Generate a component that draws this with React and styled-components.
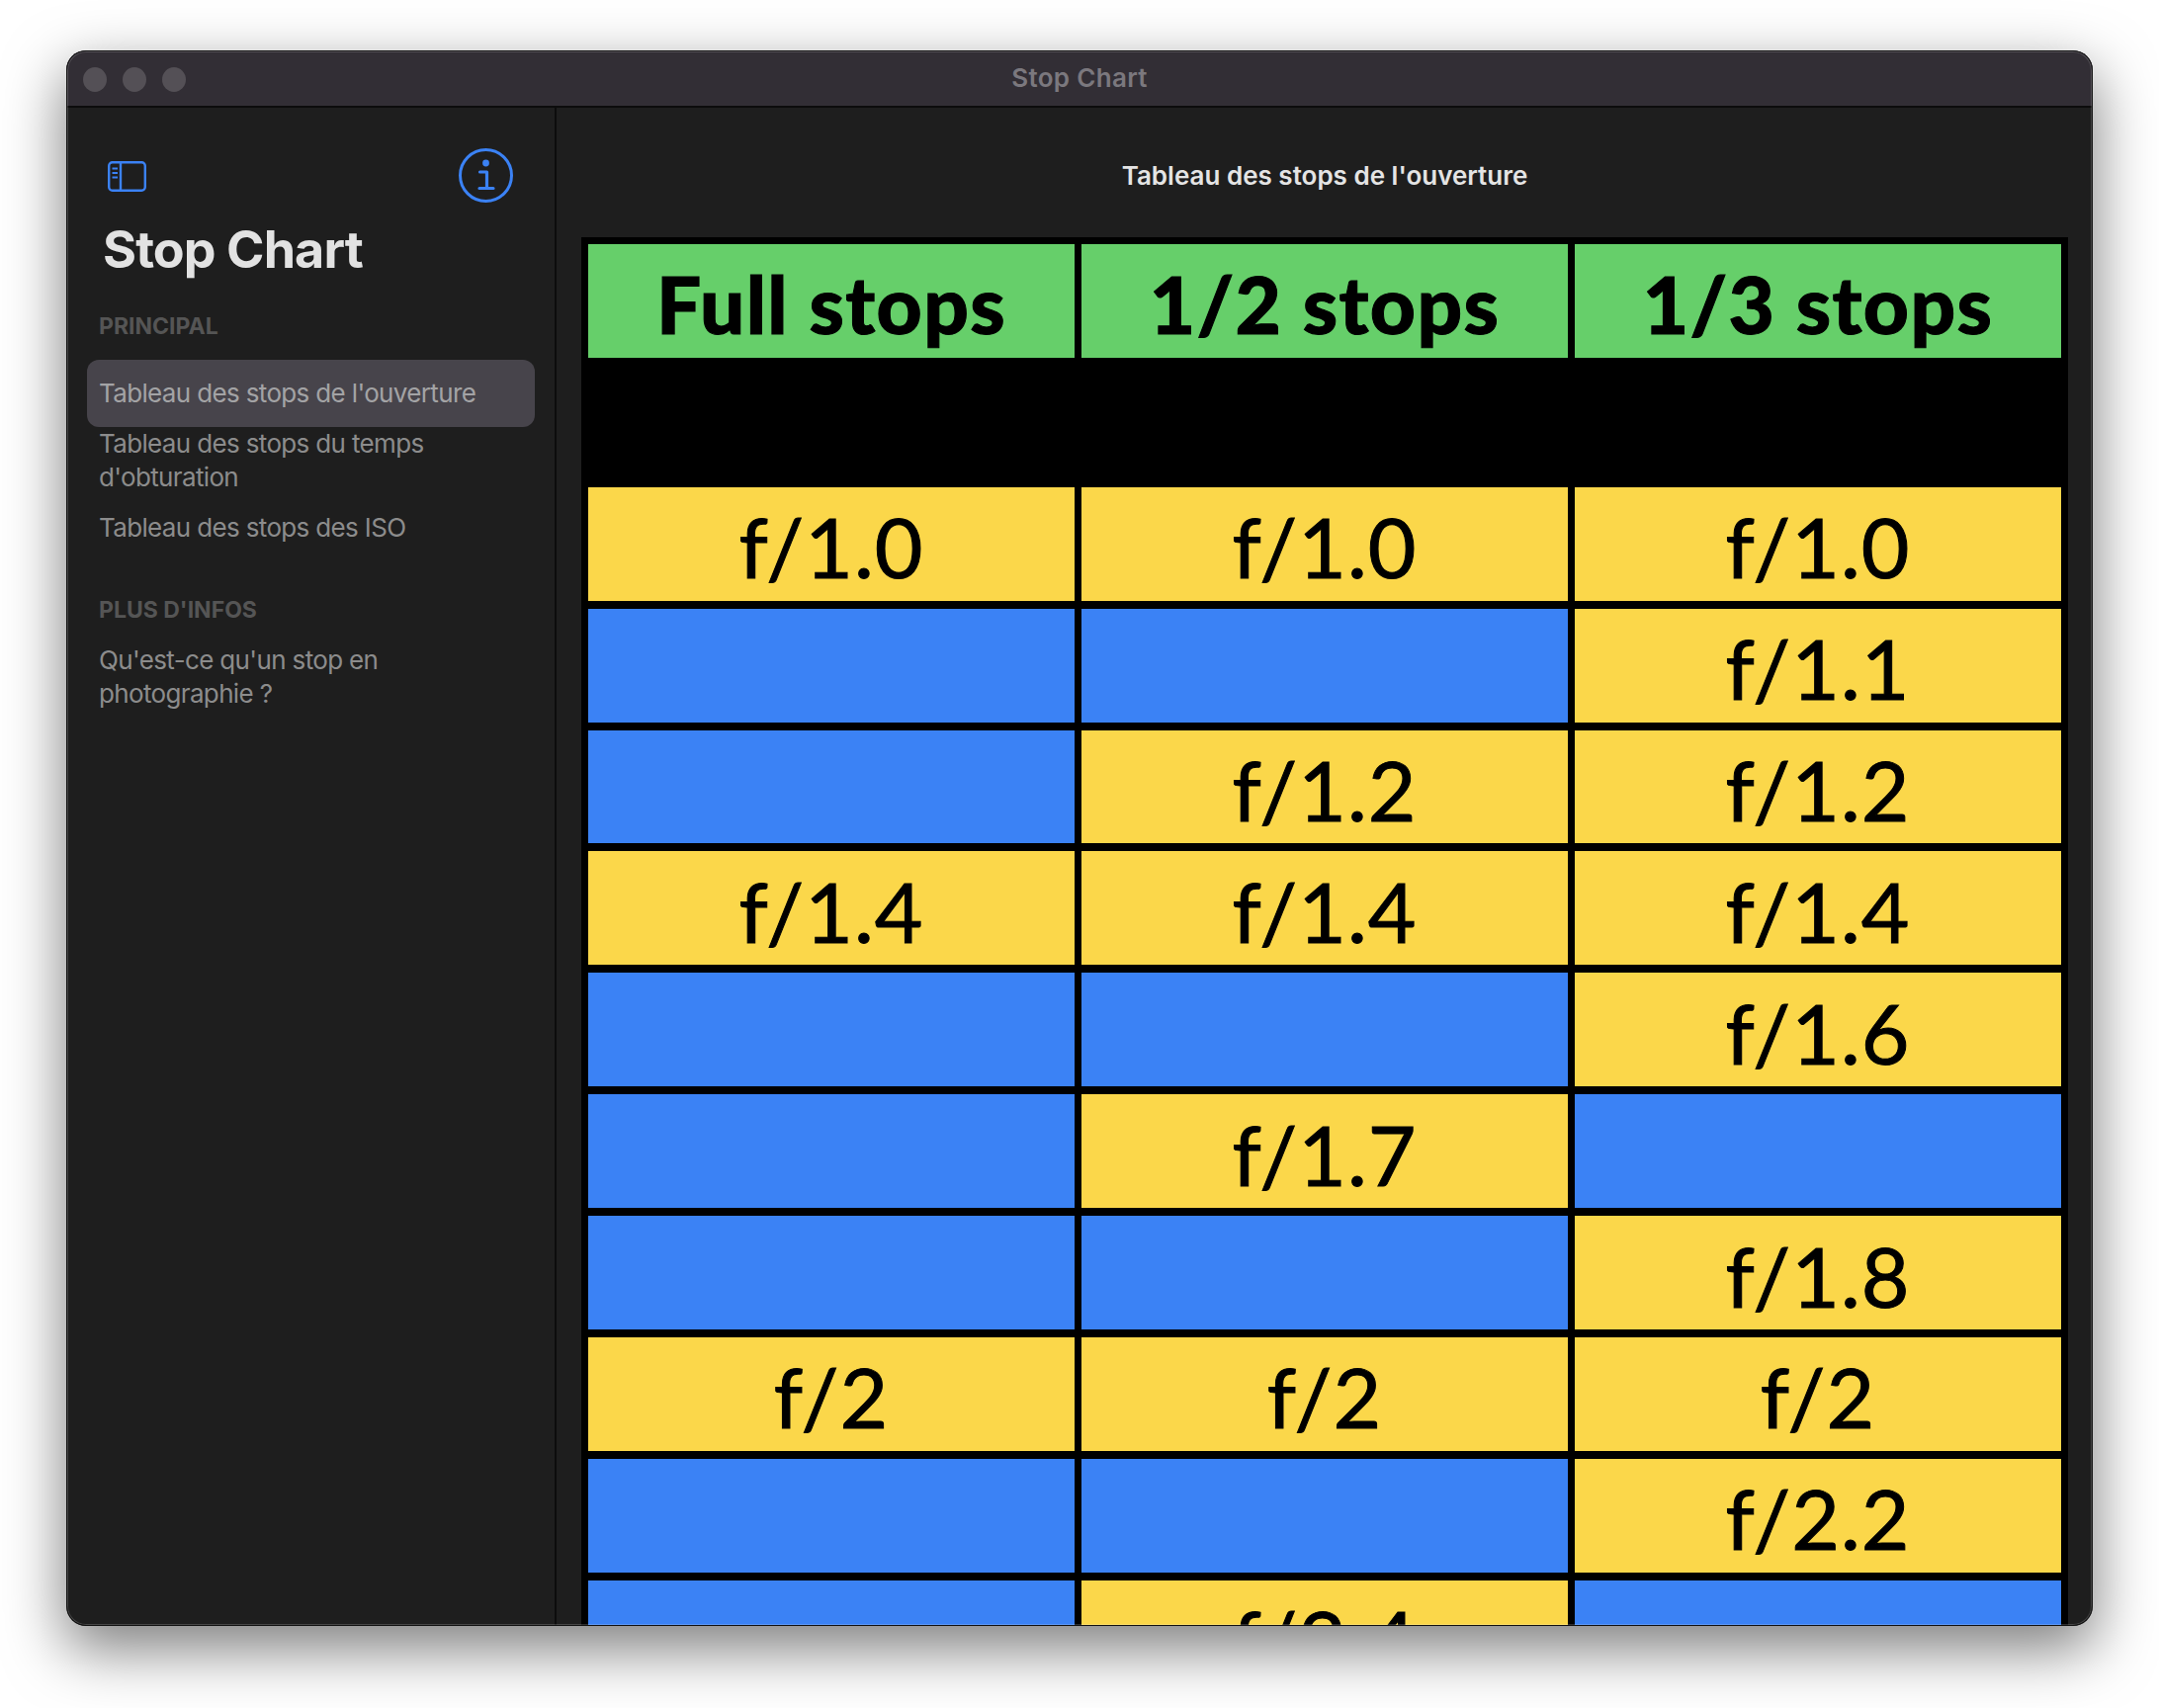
import { createGlobalStyle } from "styled-components";
import styled from "styled-components";

const GlobalStyle = createGlobalStyle`
  html, body {
    margin: 0;
    padding: 0;
    background: #fff;
  }
  * {
    box-sizing: border-box;
  }
`;

const Page = styled.div`
  width: 2184px;
  height: 1728px;
  padding: 51px 67px 0;
  overflow: hidden;
  font-family: Inter, "Liberation Sans", sans-serif;
`;

const Window = styled.div`
  position: relative;
  width: 2050px;
  height: 1594px;
  display: flex;
  flex-direction: column;
  border-radius: 20px;
  overflow: hidden;
  background: #1e1e1e;
  box-shadow: 0 22px 60px 2px rgba(0, 0, 0, 0.5);
`;

const WindowEdge = styled.div`
  position: absolute;
  inset: 0;
  border-radius: 20px;
  border: 1px solid #111;
  box-shadow: inset 0 0 0 1px rgba(255, 255, 255, 0.18);
  pointer-events: none;
`;

const TitleBar = styled.div`
  position: relative;
  flex: none;
  height: 58px;
  display: flex;
  align-items: center;
  justify-content: center;
  background: #322e35;
  border-bottom: 2px solid #0c0c0c;
`;

const Lights = styled.div`
  position: absolute;
  left: 17px;
  top: 17px;
  display: flex;
  gap: 16px;
`;

const Light = styled.span`
  width: 24px;
  height: 25px;
  border-radius: 50%;
  background: #545056;
`;

const WindowTitle = styled.div`
  color: #7b787e;
  font-size: 26px;
  font-weight: 600;
  line-height: 32px;
  letter-spacing: 0.3px;
`;

const Body = styled.div`
  flex: 1;
  min-height: 0;
  display: flex;
`;

const Sidebar = styled.aside`
  flex: none;
  width: 496px;
  padding: 41px 20px 0 21px;
  border-right: 2px solid #0c0c0c;
`;

const SidebarTop = styled.div`
  height: 55px;
  display: flex;
  align-items: center;
  justify-content: space-between;
  padding: 0 22px 0 21px;
`;

const PanelGlyph = styled.svg`
  margin-top: 2px;
`;

const AppName = styled.h1`
  margin: 18px 0 0 16px;
  color: #e2e2e2;
  font-size: 52px;
  font-weight: 700;
  line-height: 60px;
  letter-spacing: -0.9px;
`;

const SectionLabel = styled.h2`
  margin: ${(p) => p.$top}px 0 ${(p) => p.$bottom}px 12px;
  color: #555;
  font-size: 23px;
  font-weight: 700;
  line-height: 28px;
  text-transform: uppercase;
`;

const NavItem = styled.div`
  padding: ${(p) => (p.$active ? "17px 12px" : "0 12px 17px")};
  border-radius: 12px;
  background: ${(p) => (p.$active ? "#47444b" : "transparent")};
  color: ${(p) => (p.$active ? "#a3a3a5" : "#8c8c8c")};
  font-size: 26px;
  line-height: 34px;
  letter-spacing: -0.65px;
`;

const Main = styled.main`
  flex: 1;
  min-width: 0;
  display: flex;
  flex-direction: column;
  padding: 0 25px;
  overflow: hidden;
`;

const MainHeader = styled.div`
  flex: none;
  height: 131px;
  padding-top: 53px;
  text-align: center;
  color: #e4e4e4;
  font-size: 26px;
  font-weight: 600;
  line-height: 32px;
`;

const Chart = styled.div`
  display: grid;
  grid-template-columns: repeat(3, 492px);
  grid-auto-rows: 114.9px;
  gap: 8px 7px;
  padding: 7px 6px 0 7px;
  background: #000;
  font-family: Lato, "Open Sans", sans-serif;
`;

const cellColors = {
  head: "#66cf6a",
  on: "#fbd74a",
  off: "#3b82f5",
  gap: "#000",
};

const Cell = styled.div`
  display: flex;
  align-items: center;
  justify-content: center;
  padding-top: 6px;
  background: ${(p) => cellColors[p.$kind]};
  color: #000;
  font-size: ${(p) => (p.$kind === "head" ? "80px" : "84px")};
  font-weight: ${(p) => (p.$kind === "head" ? 900 : 400)};
  letter-spacing: ${(p) => (p.$kind === "head" ? "1.4px" : "1px")};
  line-height: 1;
  -webkit-text-stroke: 1px #000;
`;

const rows = [
  ["f/1.0", "f/1.0", "f/1.0"],
  ["", "", "f/1.1"],
  ["", "f/1.2", "f/1.2"],
  ["f/1.4", "f/1.4", "f/1.4"],
  ["", "", "f/1.6"],
  ["", "f/1.7", ""],
  ["", "", "f/1.8"],
  ["f/2", "f/2", "f/2"],
  ["", "", "f/2.2"],
  ["", "f/2.4", ""],
];

const SidebarIcon = () => (
  <PanelGlyph width="39" height="31" viewBox="0 0 39 31" fill="none" stroke="#3b82f5" strokeWidth="2.4">
    <rect x="1.2" y="1.2" width="36.6" height="28.6" rx="3.5" />
    <path d="M13 1.2v28.6" />
    <path d="M4.5 7.5h5.5M4.5 12h5.5M4.5 16.5h5.5" strokeWidth="2" />
  </PanelGlyph>
);

const InfoIcon = () => (
  <svg width="55" height="55" viewBox="0 0 55 55" fill="none">
    <circle cx="27.5" cy="27.5" r="26" stroke="#3b82f5" strokeWidth="3" />
    <circle cx="27.5" cy="15" r="3.4" fill="#3b82f5" />
    <path
      d="M21.5 24h7v16M21 40.5h14"
      stroke="#3b82f5"
      strokeWidth="3.2"
      strokeLinecap="round"
      strokeLinejoin="round"
    />
  </svg>
);

const App = () => {
  return (
    <Page>
      <GlobalStyle />
      <Window>
        <TitleBar>
          <Lights>
            <Light />
            <Light />
            <Light />
          </Lights>
          <WindowTitle>Stop Chart</WindowTitle>
        </TitleBar>
        <Body>
          <Sidebar>
            <SidebarTop>
              <SidebarIcon />
              <InfoIcon />
            </SidebarTop>
            <AppName>Stop Chart</AppName>
            <SectionLabel $top={33} $bottom={20}>Principal</SectionLabel>
            <NavItem $active>Tableau des stops de l'ouverture</NavItem>
            <NavItem>Tableau des stops du temps d'obturation</NavItem>
            <NavItem>Tableau des stops des ISO</NavItem>
            <SectionLabel $top={35} $bottom={20}>Plus d'infos</SectionLabel>
            <NavItem>Qu'est-ce qu'un stop en photographie ?</NavItem>
          </Sidebar>
          <Main>
            <MainHeader>Tableau des stops de l'ouverture</MainHeader>
            <Chart>
              <Cell $kind="head">Full stops</Cell>
              <Cell $kind="head">1/2 stops</Cell>
              <Cell $kind="head">1/3 stops</Cell>
              <Cell $kind="gap" />
              <Cell $kind="gap" />
              <Cell $kind="gap" />
              {rows.flatMap((row, i) =>
                row.map((value, j) => (
                  <Cell key={`${i}-${j}`} $kind={value ? "on" : "off"}>
                    {value}
                  </Cell>
                ))
              )}
            </Chart>
          </Main>
        </Body>
        <WindowEdge />
      </Window>
    </Page>
  );
};

export default App;
